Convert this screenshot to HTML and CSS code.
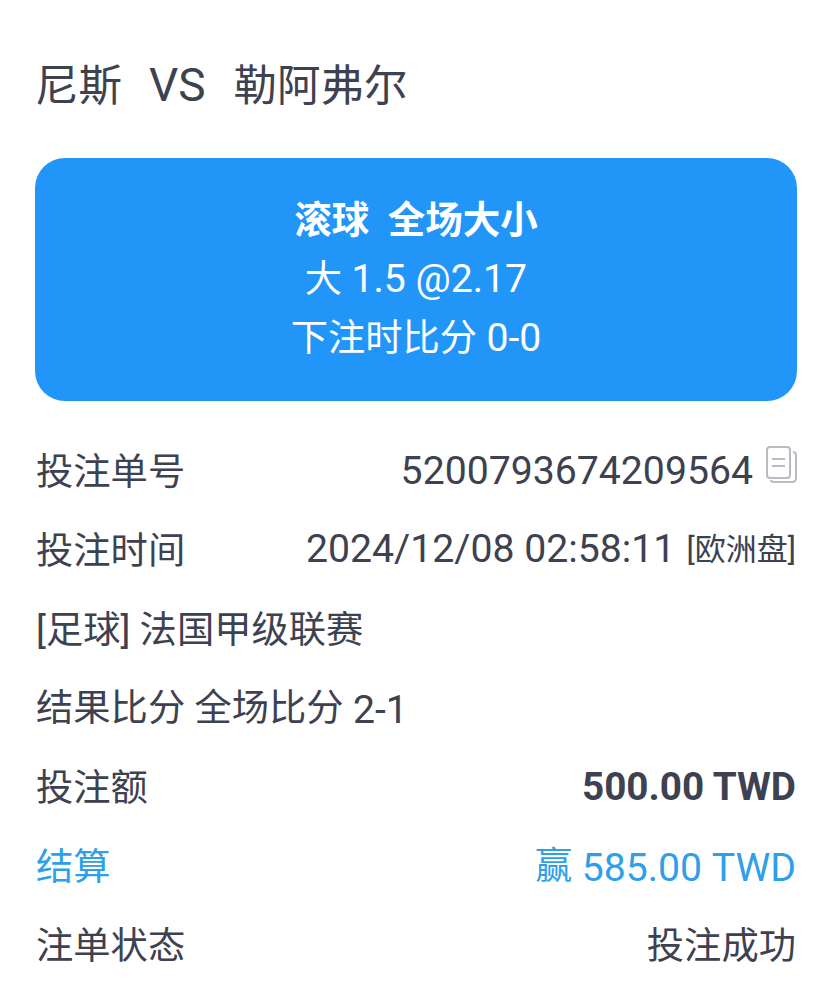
FILE: index.html
```
<!DOCTYPE html>
<html lang="zh">

<head>
	<meta charset="UTF-8">
	<meta name="viewport" content="width=device-width, initial-scale=1.0">
	<title>注单详情</title>
	<link rel="stylesheet" href="styles.css">
</head>

<body>
	<h1 class="match">尼斯<span class="vs">VS</span>勒阿弗尔</h1>

	<div class="card">
		<div class="card-title">滚球&nbsp; 全场大小</div>
		<div class="card-line">大 <span class="num">1.5 @2.17</span></div>
		<div class="card-line">下注时比分 <span class="num">0-0</span></div>
	</div>

	<div class="row">
		<span>投注单号</span>
		<span class="order">
			<span class="num">5200793674209564</span>
			<svg class="copy" width="31" height="38" viewBox="0 0 31 38" fill="none" stroke="#b9bbc2" stroke-width="2">
				<rect x="1" y="1" width="23" height="31" rx="3" />
				<path d="M27 6C29 6 30 7 30 9V32C30 35 29 36 26 36H8C6 36 5 35 5 34" />
				<path d="M6 13H19M6 20H19" />
			</svg>
		</span>
	</div>
	<div class="row">
		<span>投注时间</span>
		<span><span class="num">2024/12/08 02:58:11</span> <small>[欧洲盘]</small></span>
	</div>
	<div class="row">
		<span>[足球] 法国甲级联赛</span>
	</div>
	<div class="row">
		<span>结果比分 全场比分 <span class="num">2-1</span></span>
	</div>
	<div class="row">
		<span>投注额</span>
		<b class="num">500.00 TWD</b>
	</div>
	<div class="row settle">
		<span>结算</span>
		<span>赢 <span class="num">585.00 TWD</span></span>
	</div>
	<div class="row">
		<span>注单状态</span>
		<span>投注成功</span>
	</div>
</body>

</html>
```

FILE: styles.css
```
html,
body {
	margin: 0;
	background-color: #fff;
}

body {
	box-sizing: border-box;
	height: 1000px;
	padding: 59px 25px 0 35px;
	color: #3d4150;
	font-family: Roboto, "Noto Sans CJK SC", sans-serif;
	font-size: 37.3px;
	overflow: hidden;
}

.match {
	margin: 0 0 45px 0;
	font-size: 43.5px;
	font-weight: 400;
	line-height: 52px;
}

.vs {
	margin: 0 28px 0 27px;
	font-size: 46px;
}

.card {
	margin-bottom: 28px;
	padding: 33px 0 33px 0;
	border-radius: 30px;
	background-color: #2196f8;
	color: #fff;
	text-align: center;
	line-height: 59px;
}

.card-title {
	font-weight: 700;
	font-size: 37.5px;
}

.row {
	display: flex;
	justify-content: space-between;
	align-items: center;
	height: 79px;
	padding: 0 1px;
	white-space: nowrap;
}

.num {
	font-size: 39.2px;
}

.row .num {
	vertical-align: -2px;
}

.row small {
	margin-left: 2px;
	font-size: 31px;
}

.row b {
	margin-top: 4px;
	font-size: 38.7px;
	font-weight: 700;
}

.order {
	display: flex;
	align-items: center;
	gap: 13px;
}

.order .num {
	margin-top: 4px;
}

.copy {
	flex-shrink: 0;
	margin: -7px -1px 0 0;
}

.settle {
	color: #2f9fe9;
}
```
